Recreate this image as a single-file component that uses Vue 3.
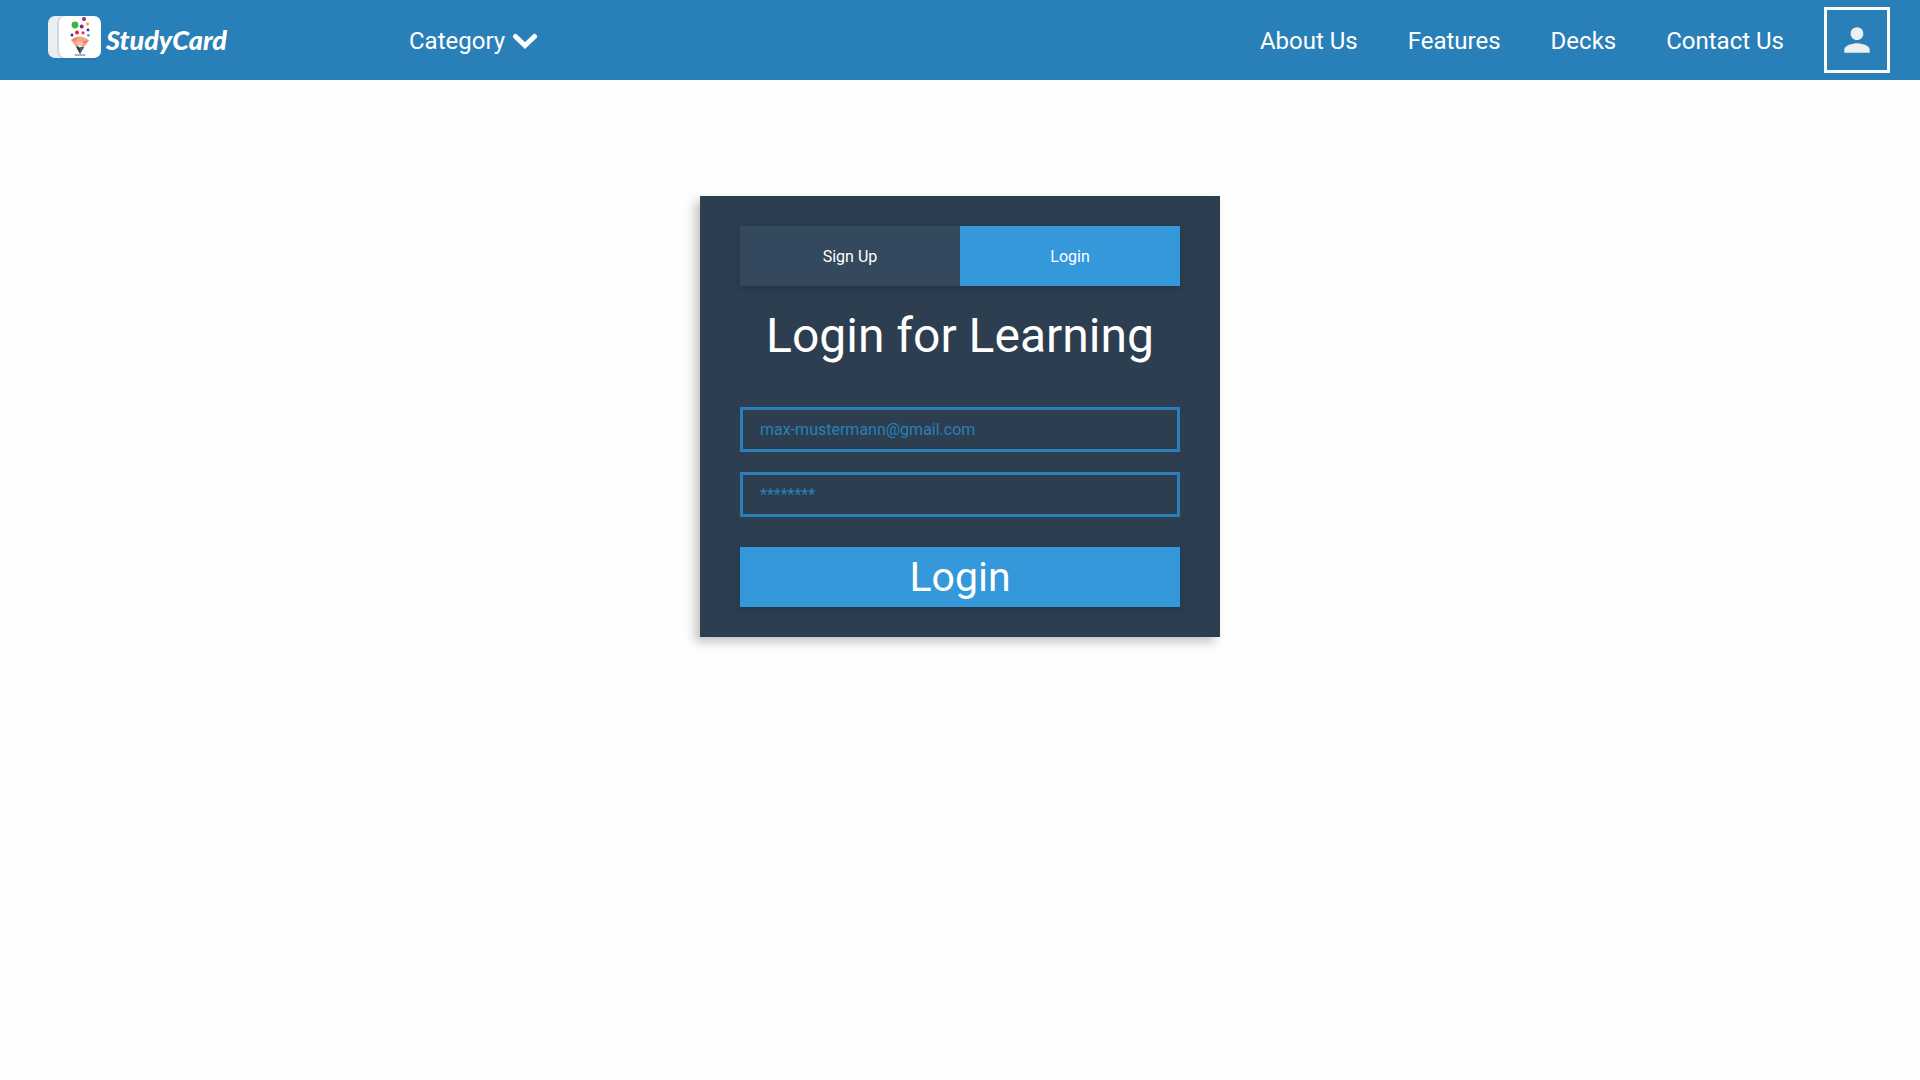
<script setup>
import { ref } from 'vue'

const links = ['About Us', 'Features', 'Decks', 'Contact Us']
const email = ref('')
const password = ref('')
</script>

<template>
  <header class="header">
    <a class="logo" href="#" aria-label="StudyCard home">
      <svg class="logo-mark" width="56" height="48" viewBox="0 0 56 48" aria-hidden="true">
        <rect x="2" y="2" width="40" height="42" rx="7" fill="#e9eef0" />
        <rect x="12" y="3" width="43" height="43" rx="8" fill="#1d5f8c" opacity=".15" />
        <rect x="11" y="2" width="20" height="42" rx="7" fill="#c9d3d9" opacity=".6" />
        <rect x="13" y="2" width="42" height="42" rx="7" fill="#fff" />
        <circle cx="38" cy="5" r="2" fill="#92278f" />
        <circle cx="29" cy="11" r="3.4" fill="#39b54a" />
        <circle cx="35.700" cy="12.500" r="2" fill="#9e1f63" />
        <circle cx="41.500" cy="10" r="1.700" fill="#fbb040" />
        <circle cx="42" cy="16" r="1.400" fill="#2b3990" />
        <circle cx="31" cy="18.500" r="1.900" fill="#ed1c24" />
        <circle cx="37" cy="18.800" r="1.600" fill="#ee2a6b" />
        <circle cx="26" cy="21" r="1.500" fill="#2b3990" />
        <circle cx="42.400" cy="21.300" r="1.400" fill="#27aae1" />
        <path d="M25 26q9-7 18 0l-5 7q-4-3-8 0z" fill="#f9a58b" />
        <path d="M25 26q4-3.500 8-3.600l-4 5z" fill="#f58466" />
        <path d="M36 27l7-1-3.500 5z" fill="#f58466" />
        <path d="M30 29l4-2 3 2-2 3z" fill="#fbc4b0" />
        <path d="M30 33q1.500-1.500 3 0t3-.5l2 .5-4 7z" fill="#2c3e50" />
        <path d="M34 33h4l-4 7z" fill="#46647c" />
        <rect x="28.500" y="40.600" width="11" height="1" rx=".5" fill="#596b7b" />
      </svg>
      <span class="logo-name">StudyCard</span>
    </a>

    <button class="category" type="button">
      Category
      <svg width="26" height="18" viewBox="0 0 26 18" aria-hidden="true">
        <path d="M3.500 4.500 13 13.500 22.500 4.500" fill="none" stroke="#fff" stroke-width="5" stroke-linecap="round" />
      </svg>
    </button>

    <nav class="nav">
      <a v-for="link in links" :key="link" href="#">{{ link }}</a>
    </nav>

    <button class="account" type="button" aria-label="Account">
      <svg width="38" height="38" viewBox="0 0 24 24" aria-hidden="true">
        <path
          fill="#ecf0f1"
          d="M12 12c2.210 0 4-1.790 4-4s-1.790-4-4-4-4 1.790-4 4 1.790 4 4 4zm0 2c-2.670 0-8 1.340-8 4v2h16v-2c0-2.660-5.330-4-8-4z"
        />
      </svg>
    </button>
  </header>

  <main class="page">
    <section class="card">
      <div class="tabs">
        <button type="button">Sign Up</button>
        <button type="button" class="active">Login</button>
      </div>
      <h1>Login for Learning</h1>
      <form class="form" @submit.prevent>
        <input v-model="email" type="email" aria-label="Email" placeholder="max-mustermann@gmail.com" />
        <input v-model="password" type="password" aria-label="Password" placeholder="********" />
        <button class="submit" type="submit">Login</button>
      </form>
    </section>
  </main>
</template>

<style>
body {
  margin: 0;
  background: #fefefe;
}
</style>

<style scoped>
.header,
.page {
  font-family: Roboto, sans-serif;
}

.header *,
.page * {
  box-sizing: border-box;
}

button,
input {
  margin: 0;
  border: 0;
  border-radius: 0;
  font-family: inherit;
}

button {
  padding: 0;
  color: #fff;
  cursor: pointer;
}

.header {
  display: flex;
  align-items: center;
  height: 80px;
  padding: 0 30px 0 46px;
  background: #2980b9;
  color: #fff;
}

.logo {
  display: flex;
  align-items: center;
  gap: 4px;
  width: 363px;
  color: #fff;
  text-decoration: none;
}

.logo-mark {
  margin-bottom: 4px;
}

.logo-name {
  font-family: Lato, sans-serif;
  font-size: 27px;
  font-style: italic;
  font-weight: 900;
  line-height: 32px;
}

.category,
.nav {
  padding-top: 2px;
  font-size: 24px;
  line-height: 28px;
}

.category {
  display: flex;
  align-items: center;
  gap: 7px;
  background: none;
}

.nav {
  display: flex;
  gap: 50px;
  margin: 0 40px 0 auto;
}

.nav a {
  color: #fff;
  text-decoration: none;
}

.account {
  display: flex;
  align-items: center;
  justify-content: center;
  width: 66px;
  height: 66px;
  border: 3px solid #fff;
  background: none;
}

.page {
  display: flex;
  justify-content: center;
  padding: 116px 20px 40px;
}

.card {
  width: 100%;
  max-width: 520px;
  padding: 30px 40px;
  background: #2c3e50;
  color: #fff;
  box-shadow: -5px 5px 10px rgba(0, 0, 0, 0.24);
}

.tabs {
  display: flex;
  box-shadow: 0 3px 8px rgba(0, 0, 0, 0.16);
}

.tabs button {
  flex: 1;
  height: 60px;
  background: #34495e;
  font-size: 16px;
}

.tabs .active {
  background: #3498db;
}

h1 {
  margin: 22px 0 43px;
  font-size: 48px;
  font-weight: 400;
  line-height: 56px;
  text-align: center;
}

.form {
  display: flex;
  flex-direction: column;
  gap: 20px;
}

.form input {
  height: 45px;
  padding: 0 17px;
  border: 3px solid #2980b9;
  background: none;
  color: #2980b9;
  font-size: 16px;
}

.form input::placeholder {
  color: #2980b9;
  opacity: 1;
}

.submit {
  height: 60px;
  margin-top: 10px;
  background: #3498db;
  box-shadow: 0 3px 8px rgba(0, 0, 0, 0.16);
  font-size: 41px;
}
</style>
